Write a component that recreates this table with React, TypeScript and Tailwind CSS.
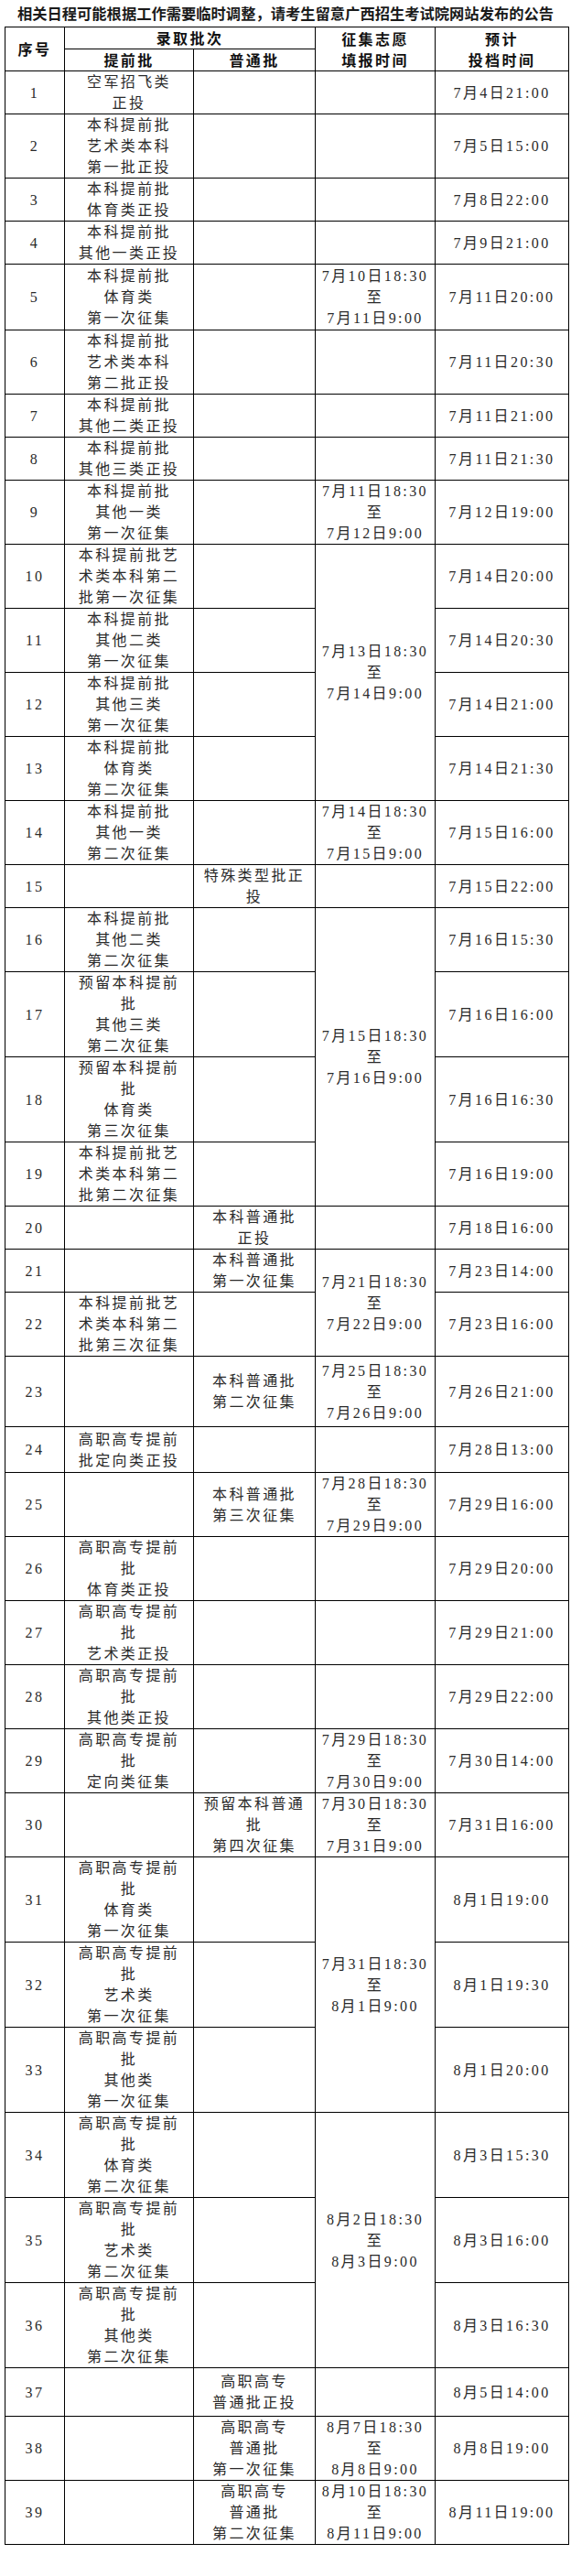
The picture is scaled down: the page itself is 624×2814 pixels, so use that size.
type Row = {
  no: number
  h: string
  early: string[]
  normal: string[]
  win: string[] | 'skip'
  span?: number
  time: string
}

// row heights are one pixel under the measured size: the collapsed border adds it back
const rows: Row[] = [
  { no: 1, h: 'h-[46px]', early: ['空军招飞类', '正投'], normal: [], win: [], time: '7月4日21:00' },
  { no: 2, h: 'h-[70px]', early: ['本科提前批', '艺术类本科', '第一批正投'], normal: [], win: [], time: '7月5日15:00' },
  { no: 3, h: 'h-[45px]', early: ['本科提前批', '体育类正投'], normal: [], win: [], time: '7月8日22:00' },
  { no: 4, h: 'h-[46px]', early: ['本科提前批', '其他一类正投'], normal: [], win: [], time: '7月9日21:00' },
  { no: 5, h: 'h-[72px]', early: ['本科提前批', '体育类', '第一次征集'], normal: [], win: ['7月10日18:30', '至', '7月11日9:00'], time: '7月11日20:00' },
  { no: 6, h: 'h-[68px]', early: ['本科提前批', '艺术类本科', '第二批正投'], normal: [], win: [], time: '7月11日20:30' },
  { no: 7, h: 'h-[47px]', early: ['本科提前批', '其他二类正投'], normal: [], win: [], time: '7月11日21:00' },
  { no: 8, h: 'h-[46px]', early: ['本科提前批', '其他三类正投'], normal: [], win: [], time: '7月11日21:30' },
  { no: 9, h: 'h-[69px]', early: ['本科提前批', '其他一类', '第一次征集'], normal: [], win: ['7月11日18:30', '至', '7月12日9:00'], time: '7月12日19:00' },
  { no: 10, h: 'h-[69px]', early: ['本科提前批艺', '术类本科第二', '批第一次征集'], normal: [], win: ['7月13日18:30', '至', '7月14日9:00'], span: 4, time: '7月14日20:00' },
  { no: 11, h: 'h-[70px]', early: ['本科提前批', '其他二类', '第一次征集'], normal: [], win: 'skip', time: '7月14日20:30' },
  { no: 12, h: 'h-[68px]', early: ['本科提前批', '其他三类', '第一次征集'], normal: [], win: 'skip', time: '7月14日21:00' },
  { no: 13, h: 'h-[70px]', early: ['本科提前批', '体育类', '第二次征集'], normal: [], win: 'skip', time: '7月14日21:30' },
  { no: 14, h: 'h-[68px]', early: ['本科提前批', '其他一类', '第二次征集'], normal: [], win: ['7月14日18:30', '至', '7月15日9:00'], time: '7月15日16:00' },
  { no: 15, h: 'h-[46px]', early: [], normal: ['特殊类型批正', '投'], win: [], time: '7月15日22:00' },
  { no: 16, h: 'h-[69px]', early: ['本科提前批', '其他二类', '第二次征集'], normal: [], win: ['7月15日18:30', '至', '7月16日9:00'], span: 4, time: '7月16日15:30' },
  { no: 17, h: 'h-[92px]', early: ['预留本科提前', '批', '其他三类', '第二次征集'], normal: [], win: 'skip', time: '7月16日16:00' },
  { no: 18, h: 'h-[91px]', early: ['预留本科提前', '批', '体育类', '第三次征集'], normal: [], win: 'skip', time: '7月16日16:30' },
  { no: 19, h: 'h-[69px]', early: ['本科提前批艺', '术类本科第二', '批第二次征集'], normal: [], win: 'skip', time: '7月16日19:00' },
  { no: 20, h: 'h-[46px]', early: [], normal: ['本科普通批', '正投'], win: [], time: '7月18日16:00' },
  { no: 21, h: 'h-[45px]', early: [], normal: ['本科普通批', '第一次征集'], win: ['7月21日18:30', '至', '7月22日9:00'], span: 2, time: '7月23日14:00' },
  { no: 22, h: 'h-[70px]', early: ['本科提前批艺', '术类本科第二', '批第三次征集'], normal: [], win: 'skip', time: '7月23日16:00' },
  { no: 23, h: 'h-[77px]', early: [], normal: ['本科普通批', '第二次征集'], win: ['7月25日18:30', '至', '7月26日9:00'], time: '7月26日21:00' },
  { no: 24, h: 'h-[50px]', early: ['高职高专提前', '批定向类正投'], normal: [], win: [], time: '7月28日13:00' },
  { no: 25, h: 'h-[69px]', early: [], normal: ['本科普通批', '第三次征集'], win: ['7月28日18:30', '至', '7月29日9:00'], time: '7月29日16:00' },
  { no: 26, h: 'h-[69px]', early: ['高职高专提前', '批', '体育类正投'], normal: [], win: [], time: '7月29日20:00' },
  { no: 27, h: 'h-[69px]', early: ['高职高专提前', '批', '艺术类正投'], normal: [], win: [], time: '7月29日21:00' },
  { no: 28, h: 'h-[70px]', early: ['高职高专提前', '批', '其他类正投'], normal: [], win: [], time: '7月29日22:00' },
  { no: 29, h: 'h-[69px]', early: ['高职高专提前', '批', '定向类征集'], normal: [], win: ['7月29日18:30', '至', '7月30日9:00'], time: '7月30日14:00' },
  { no: 30, h: 'h-[69px]', early: [], normal: ['预留本科普通', '批', '第四次征集'], win: ['7月30日18:30', '至', '7月31日9:00'], time: '7月31日16:00' },
  { no: 31, h: 'h-[92px]', early: ['高职高专提前', '批', '体育类', '第一次征集'], normal: [], win: ['7月31日18:30', '至', '8月1日9:00'], span: 3, time: '8月1日19:00' },
  { no: 32, h: 'h-[92px]', early: ['高职高专提前', '批', '艺术类', '第一次征集'], normal: [], win: 'skip', time: '8月1日19:30' },
  { no: 33, h: 'h-[92px]', early: ['高职高专提前', '批', '其他类', '第一次征集'], normal: [], win: 'skip', time: '8月1日20:00' },
  { no: 34, h: 'h-[92px]', early: ['高职高专提前', '批', '体育类', '第二次征集'], normal: [], win: ['8月2日18:30', '至', '8月3日9:00'], span: 3, time: '8月3日15:30' },
  { no: 35, h: 'h-[92px]', early: ['高职高专提前', '批', '艺术类', '第二次征集'], normal: [], win: 'skip', time: '8月3日16:00' },
  { no: 36, h: 'h-[92px]', early: ['高职高专提前', '批', '其他类', '第二次征集'], normal: [], win: 'skip', time: '8月3日16:30' },
  { no: 37, h: 'h-[53px]', early: [], normal: ['高职高专', '普通批正投'], win: [], time: '8月5日14:00' },
  { no: 38, h: 'h-[69px]', early: [], normal: ['高职高专', '普通批', '第一次征集'], win: ['8月7日18:30', '至', '8月8日9:00'], time: '8月8日19:00' },
  { no: 39, h: 'h-[69px]', early: [], normal: ['高职高专', '普通批', '第二次征集'], win: ['8月10日18:30', '至', '8月11日9:00'], time: '8月11日19:00' },
]

const cell = 'border border-black p-0 text-center align-middle'

const Lines = ({ lines }: { lines: string[] }) => (
  <>
    {lines.map((l, i) => (
      <div key={i} className="whitespace-nowrap">
        {l}
      </div>
    ))}
  </>
)

export default function App() {
  return (
    <div className="w-[624px] bg-white pb-[30px] text-[#2a2a2a]">
      <div className="flex h-[29px] items-center justify-center font-['Noto_Sans_CJK_SC',sans-serif] text-[16.3px] font-bold leading-none text-[#1a1a1a]">
        相关日程可能根据工作需要临时调整，请考生留意广西招生考试院网站发布的公告
      </div>
      <table className="ml-[5px] w-[616px] table-fixed border-collapse font-['Liberation_Serif','Noto_Sans_CJK_SC',serif] text-[16px] leading-[23px] tracking-[2.4px]">
        <colgroup>
          <col className="w-[65px]" />
          <col className="w-[141px]" />
          <col className="w-[133px]" />
          <col className="w-[131px]" />
          <col className="w-[146px]" />
        </colgroup>
        <thead className="font-['Noto_Sans_CJK_SC',sans-serif] font-bold text-[#111]">
          <tr className="h-[24px]">
            <th rowSpan={2} className={cell}>
              序号
            </th>
            <th colSpan={2} className={cell}>
              录取批次
            </th>
            <th rowSpan={2} className={cell}>
              <Lines lines={['征集志愿', '填报时间']} />
            </th>
            <th rowSpan={2} className={cell}>
              <Lines lines={['预计', '投档时间']} />
            </th>
          </tr>
          <tr className="h-[24px]">
            <th className={cell}>提前批</th>
            <th className={cell}>普通批</th>
          </tr>
        </thead>
        <tbody className="font-normal">
          {rows.map((r) => (
            <tr key={r.no} className={r.h}>
              <td className={cell}>{r.no}</td>
              <td className={cell}>
                <Lines lines={r.early} />
              </td>
              <td className={cell}>
                <Lines lines={r.normal} />
              </td>
              {r.win !== 'skip' && (
                <td rowSpan={r.span ?? 1} className={cell}>
                  <Lines lines={r.win} />
                </td>
              )}
              <td className={cell}>{r.time}</td>
            </tr>
          ))}
        </tbody>
      </table>
    </div>
  )
}
